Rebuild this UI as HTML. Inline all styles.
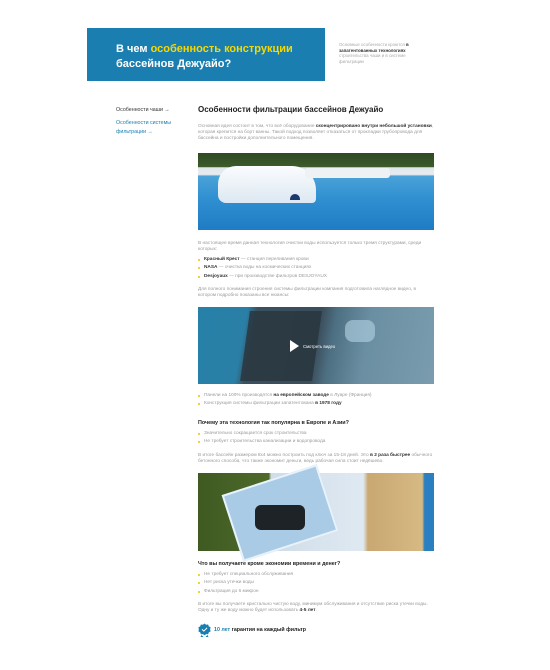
<!DOCTYPE html>
<html><head><meta charset="utf-8">
<style>
*{margin:0;padding:0;box-sizing:border-box}
body{width:550px;height:670px;background:#fff;position:relative;overflow:hidden;font-family:"Liberation Sans","Noto Sans CJK SC",sans-serif;color:#999}
.a{position:absolute}
.p{font-size:4.75px;line-height:5.9px;color:#9a9a9a}
.p b{color:#333;font-weight:bold}
.li{font-size:4.75px;line-height:8.3px;color:#9a9a9a;padding-left:6px;position:relative;white-space:nowrap}
.li:before{content:"";position:absolute;left:0;top:3px;width:2px;height:2px;border-radius:1px;background:#f2c200}
.li b{color:#333}
.h3{font-size:5.4px;font-weight:bold;color:#222;white-space:nowrap}
</style></head><body>
<div class="a" style="left:87px;top:28px;width:238px;height:53px;background:#1a7fb0"></div>
<div class="a" style="left:116px;top:42px;font-size:11px;line-height:15px;font-weight:bold;color:#fff;white-space:nowrap">В чем <span style="color:#f7d800">особенность конструкции</span><br>бассейнов Дежуайо?</div>
<div class="a p" style="left:339px;top:42px;width:82px;font-size:4.4px;line-height:5.6px;color:#aaa">Основные особенности кроются <b>в запатентованных технологиях</b> строительства чаши и в системе фильтрации</div>

<div class="a" style="left:116px;top:107px;font-size:5.3px;color:#333;white-space:nowrap">Особенности чаши →</div>
<div class="a" style="left:116px;top:119px;font-size:5.3px;line-height:8.5px;color:#1a7fb0;white-space:nowrap">Особенности системы<br>фильтрации →</div>

<div class="a" style="left:198px;top:105px;font-size:8px;font-weight:bold;color:#222;white-space:nowrap">Особенности фильтрации бассейнов Дежуайо</div>
<div class="a p" style="left:198px;top:124px;width:236px">Основная идея состоит в том, что всё оборудование <b>сконцентрировано внутри небольшой установки</b>, которая крепится на борт ванны. Такой подход позволяет отказаться от прокладки трубопровода для бассейна и постройки дополнительного помещения.</div>

<div class="a" style="left:198px;top:153px;width:236px;height:77px;background:linear-gradient(#2e4a22 0,#3c5a2c 18%,#dfe6ea 19%,#e8ecef 28%,#4aa2d8 30%,#2f8fd0 60%,#1f7cc4 100%)"></div>
<div class="a" style="left:218px;top:166px;width:98px;height:37px;background:linear-gradient(#fafcfe,#dde8f2);border-radius:18px 24px 4px 8px"></div>
<div class="a" style="left:305px;top:168px;width:85px;height:10px;background:#eef2f5;border-radius:3px"></div>
<div class="a" style="left:290px;top:194px;width:10px;height:6px;background:#1c3a72;border-radius:5px 5px 0 0"></div>

<div class="a p" style="left:198px;top:241px;width:236px">В настоящее время данная технология очистки воды используется только тремя структурами, среди которых:</div>
<div class="a" style="left:198px;top:256px">
<div class="li"><b>Красный Крест</b> — станция переливания крови</div>
<div class="li"><b>NASA</b> — очистка воды на космических станциях</div>
<div class="li"><b>Desjoyaux</b> — при производстве фильтров DESJOYAUX</div>
</div>
<div class="a p" style="left:198px;top:287px;width:236px">Для полного понимания строения системы фильтрации компания подготовила наглядное видео, в котором подробно показаны все нюансы:</div>

<div class="a" style="left:198px;top:307px;width:236px;height:77px;background:linear-gradient(100deg,#2680a8 0,#2a7fa6 20%,#3a5060 24%,#3a4e5c 50%,#4d6f82 56%,#6b8fa2 70%,#7a9cae 100%)"></div>
<div class="a" style="left:245px;top:311px;width:72px;height:70px;background:#28343c;opacity:.8;transform:skewX(-8deg)"></div>
<div class="a" style="left:345px;top:320px;width:30px;height:22px;background:#a9c9da;border-radius:8px;opacity:.7"></div>
<div class="a" style="left:290px;top:340px;width:0;height:0;border-left:9px solid #fff;border-top:6px solid transparent;border-bottom:6px solid transparent"></div>
<div class="a" style="left:303px;top:344px;font-size:4.3px;color:#fff;white-space:nowrap">Смотреть видео</div>

<div class="a" style="left:198px;top:392px">
<div class="li">Панели на 100% производятся <b>на европейском заводе</b> в Луаре (Франция)</div>
<div class="li">Конструкция системы фильтрации запатентована <b>в 1978 году</b></div>
</div>
<div class="a h3" style="left:198px;top:420px">Почему эта технология так популярна в Европе и Азии?</div>
<div class="a" style="left:198px;top:430px">
<div class="li">Значительно сокращается срок строительства</div>
<div class="li">Не требует строительства канализации и водопровода</div>
</div>
<div class="a p" style="left:198px;top:453px;width:236px">В итоге бассейн размером 8х4 можно построить под ключ за 15-18 дней. Это <b>в 2 раза быстрее</b> обычного бетонного способа, что также экономит деньги, ведь рабочая сила стоит недёшево.</div>

<div class="a" style="left:198px;top:473px;width:236px;height:78px;background:linear-gradient(90deg,#3f5a22 0,#4e6a2a 30%,#cfdde8 31%,#dfe9f2 70%,#c9a872 72%,#d6b983 95%,#2a7fc0 96%)"></div>
<div class="a" style="left:230px;top:478px;width:100px;height:70px;background:#a9cbe6;border:2px solid #e8f2fa;transform:rotate(-18deg)"></div>
<div class="a" style="left:255px;top:505px;width:50px;height:25px;background:#1e2327;border-radius:6px"></div>

<div class="a h3" style="left:198px;top:561px">Что вы получаете кроме экономии времени и денег?</div>
<div class="a" style="left:198px;top:571px">
<div class="li">Не требует специального обслуживания</div>
<div class="li">Нет риска утечки воды</div>
<div class="li">Фильтрация до 6 микрон</div>
</div>
<div class="a p" style="left:198px;top:602px;width:236px">В итоге вы получаете кристально чистую воду, минимум обслуживания и отсутствие риска утечки воды. Одну и ту же воду можно будет использовать <b>4-5 лет</b>.</div>

<svg class="a" style="left:198px;top:623px" width="13" height="14" viewBox="0 0 13 14"><path d="M6.5 0.5l1.6 1.2 2-.2.7 1.9 1.8 1-.5 2 .5 2-1.8 1-.7 1.9-2-.2-1.6 1.2-1.6-1.2-2 .2-.7-1.9-1.8-1 .5-2-.5-2 1.8-1 .7-1.9 2 .2z" fill="#1a7fb0"/><path d="M3.5 12l-1 2h3zM9.5 12l1 2h-3z" fill="#1a7fb0"/><path d="M4 6.3l1.8 1.8 3.3-3.3" stroke="#fff" stroke-width="1" fill="none"/></svg>
<div class="a" style="left:214px;top:627px;font-size:5.3px;font-weight:bold;color:#222;white-space:nowrap"><span style="color:#1a7fb0">10 лет</span> гарантия на каждый фильтр</div>
</body></html>
